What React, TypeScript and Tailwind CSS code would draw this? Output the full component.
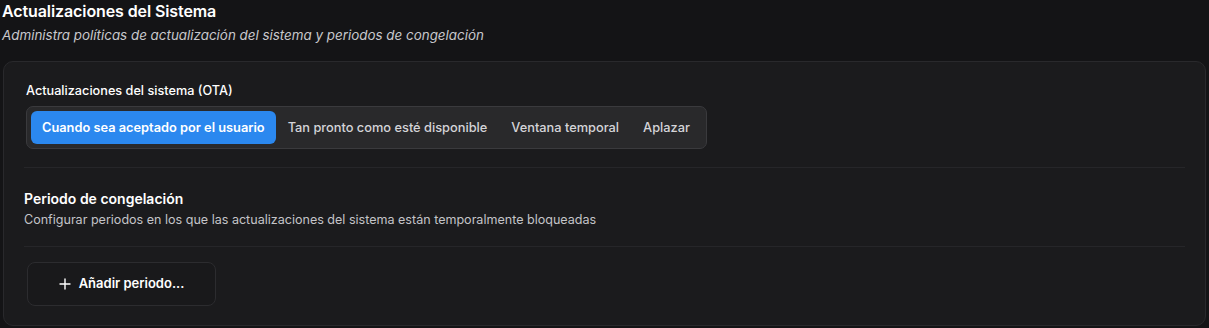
import React from "react";

export default function App() {
  const tabs = [
    "Cuando sea aceptado por el usuario",
    "Tan pronto como esté disponible",
    "Ventana temporal",
    "Aplazar",
  ];
  return (
    <div
      className="w-[1209px] h-[328px] bg-[#141416] text-white overflow-hidden"
      style={{ fontFamily: "Inter, 'Noto Sans', sans-serif" }}
    >
      <div className="pl-[2px] pt-[1px]">
        <h1 className="text-[16px] leading-[20px] font-semibold text-white tracking-[-0.1px]">
          Actualizaciones del Sistema
        </h1>
        <p className="mt-[5px] text-[13.4px] leading-[18px] italic text-[#c8c8cc]">
          Administra políticas de actualización del sistema y periodos de congelación
        </p>
      </div>
      <div className="ml-[3px] mr-[3px] mt-[17px] h-[265px] rounded-[10px] border border-[#29292c] bg-[#1b1b1d] px-[20px] pt-[21px]">
        <div className="text-[12.7px] leading-[16px] font-medium text-white pl-[2px]">
          Actualizaciones del sistema (OTA)
        </div>
        <div className="mt-[7px] ml-[2px] inline-flex items-center rounded-[7px] border border-[#3a3a3d] bg-[#29292b] p-[4px]">
          {tabs.map((t, i) => (
            <div
              key={t}
              className={
                i === 0
                  ? "h-[33px] flex items-center rounded-[6px] bg-[#2b88ef] px-[11px] text-[12.8px] font-semibold text-white"
                  : "h-[33px] flex items-center px-[12px] text-[12.8px] font-medium text-[#d4d4d8]"
              }
            >
              {t}
            </div>
          ))}
        </div>
        <div className="mt-[18px] h-px bg-[#262629]" />
        <div className="mt-[22px] text-[14px] leading-[18px] font-semibold text-white">
          Periodo de congelación
        </div>
        <div className="mt-[4px] text-[12.55px] leading-[16px] text-[#c4c4c8]">
          Configurar periodos en los que las actualizaciones del sistema están temporalmente bloqueadas
        </div>
        <div className="mt-[18px] h-px bg-[#262629]" />
        <button className="mt-[15px] ml-[3px] flex h-[44px] w-[189px] items-center justify-center gap-[8px] rounded-[8px] border border-[#2c2c2f] bg-[#19191b] text-[13px] font-semibold text-white">
          <svg width="12" height="12" viewBox="0 0 12 12" fill="none" stroke="currentColor" strokeWidth="1.4" strokeLinecap="round">
            <path d="M6 1v10M1 6h10" />
          </svg>
          Añadir periodo...
        </button>
      </div>
    </div>
  );
}
